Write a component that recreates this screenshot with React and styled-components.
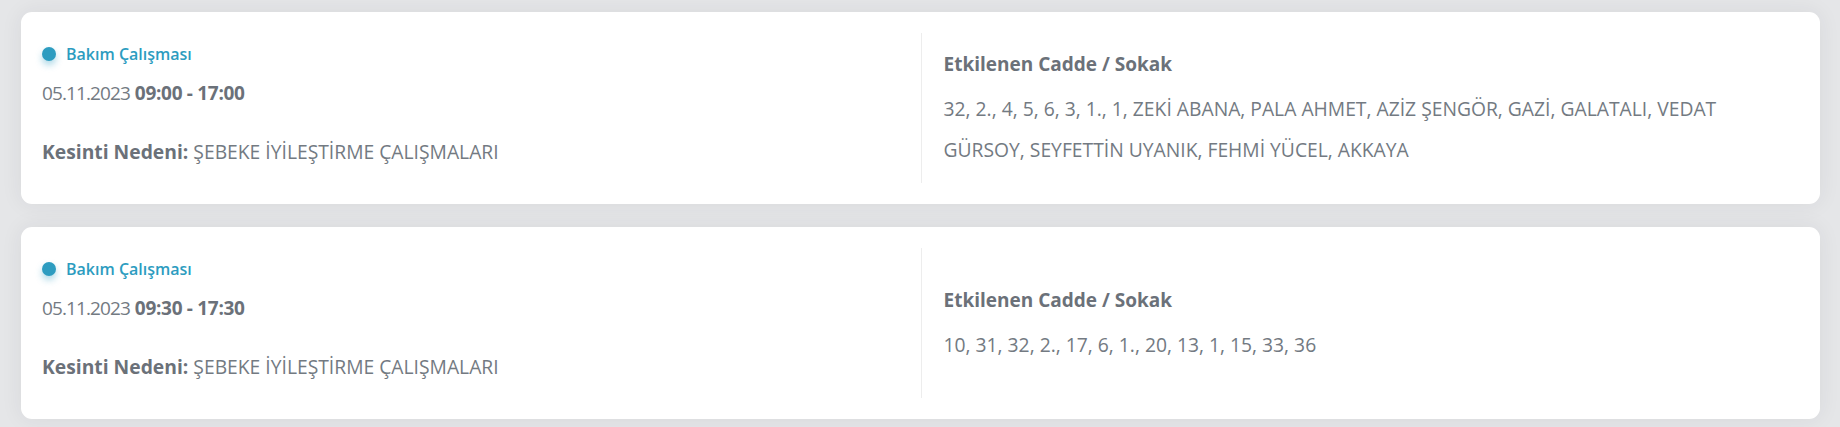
import styled, { createGlobalStyle } from 'styled-components';

const GlobalStyle = createGlobalStyle`
  * {
    margin: 0;
    padding: 0;
    box-sizing: border-box;
  }

  body {
    background-color: #e5e6e8;
    font-family: "Open Sans", "Noto Sans", sans-serif;
    color: #737a82;
  }
`;

const List = styled.div`
  display: flex;
  flex-direction: column;
  gap: 23px;
  padding: 12px 20px 8px 21px;
`;

const Card = styled.div`
  display: grid;
  grid-template-columns: 1fr 1fr;
  padding: 21px 0;
  min-height: 192px;
  background: #fff;
  border-radius: 11px;
  box-shadow: 0 0 22px rgba(40, 44, 52, 0.07);
`;

const Left = styled.div`
  display: flex;
  flex-direction: column;
  align-items: flex-start;
  padding: 9px 22px 0 21px;
`;

const Badge = styled.div`
  display: flex;
  align-items: center;
  gap: 10px;
  height: 24px;
  font-size: 16px;
  font-weight: 600;
  color: #2c9cc0;
`;

const Dot = styled.span`
  width: 14px;
  height: 14px;
  border-radius: 50%;
  background: #2d9cc0;
  box-shadow: 0 4px 7px rgba(44, 156, 192, 0.4);
`;

const DateLine = styled.div`
  margin-top: 13px;
  font-size: 19px;
  line-height: 28px;

  span {
    letter-spacing: -0.9px;
  }

  b {
    font-weight: 700;
    color: #6b7179;
    letter-spacing: -0.3px;
  }
`;

const Reason = styled.div`
  margin-top: 31px;
  font-size: 19.3px;
  line-height: 28px;

  b {
    font-weight: 700;
    color: #6b7179;
  }
`;

const Right = styled.div`
  display: flex;
  flex-direction: column;
  justify-content: center;
  padding: 4px 40px 0 22px;
  border-left: 1px solid #ededed;
`;

const Title = styled.h4`
  font-size: 19px;
  line-height: 28px;
  font-weight: 700;
  color: #6b7179;
  margin-bottom: 10px;
`;

const Streets = styled.p`
  font-size: 19.3px;
  line-height: 41px;
`;

const outages = [
  {
    date: '05.11.2023',
    time: '09:00 - 17:00',
    reason: 'ŞEBEKE İYİLEŞTİRME ÇALIŞMALARI',
    streets:
      '32, 2., 4, 5, 6, 3, 1., 1, ZEKİ ABANA, PALA AHMET, AZİZ ŞENGÖR, GAZİ, GALATALI, VEDAT GÜRSOY, SEYFETTİN UYANIK, FEHMİ YÜCEL, AKKAYA',
  },
  {
    date: '05.11.2023',
    time: '09:30 - 17:30',
    reason: 'ŞEBEKE İYİLEŞTİRME ÇALIŞMALARI',
    streets: '10, 31, 32, 2., 17, 6, 1., 20, 13, 1, 15, 33, 36',
  },
];

function App() {
  return (
    <List>
      <GlobalStyle />
      {outages.map((o, i) => (
        <Card key={i}>
          <Left>
            <Badge>
              <Dot />
              Bakım Çalışması
            </Badge>
            <DateLine>
              <span>{o.date}</span> <b>{o.time}</b>
            </DateLine>
            <Reason>
              <b>Kesinti Nedeni:</b> {o.reason}
            </Reason>
          </Left>
          <Right>
            <Title>Etkilenen Cadde / Sokak</Title>
            <Streets>{o.streets}</Streets>
          </Right>
        </Card>
      ))}
    </List>
  );
}

export default App;
